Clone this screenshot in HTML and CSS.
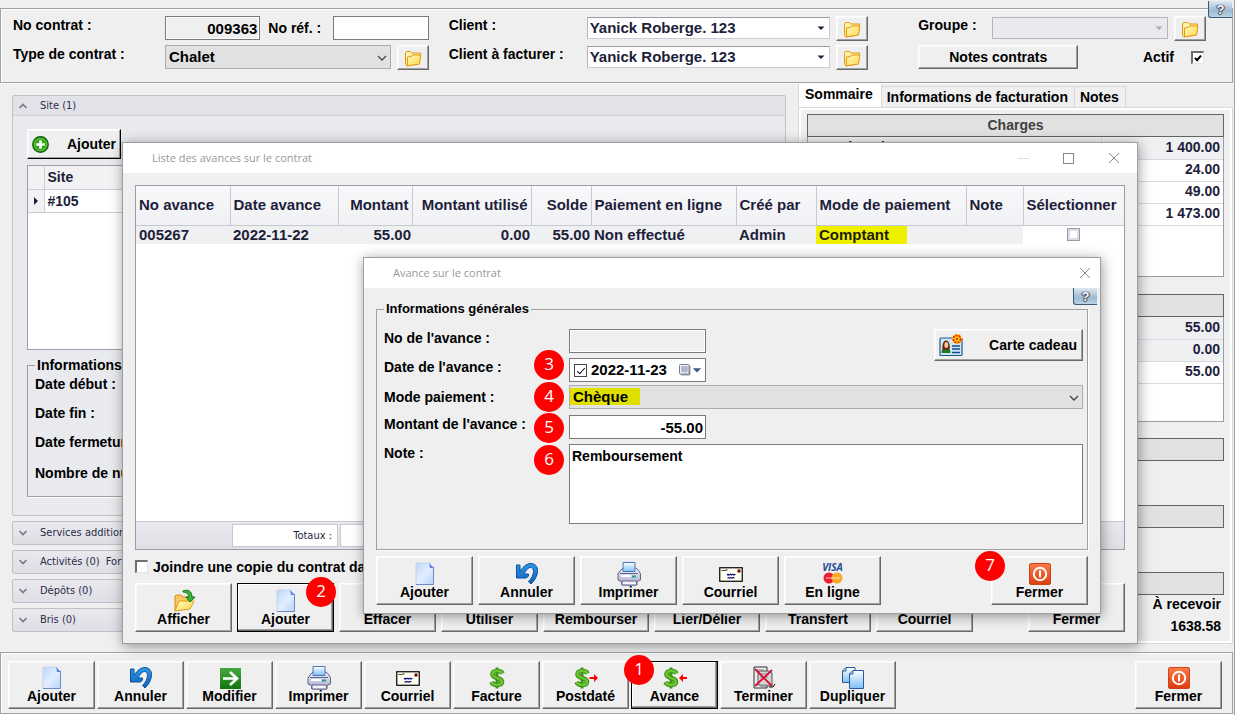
FILE: index.html
```html
<!DOCTYPE html>
<html lang="fr">
<head>
<meta charset="utf-8">
<title>Contrat 009363</title>
<link rel="stylesheet" href="styles.css">
</head>
<body>
<svg class="defs" aria-hidden="true">
  <defs>
    <linearGradient id="gPage" x1="0" y1="0" x2="1" y2="1"><stop offset="0" stop-color="#bcd4f8"/><stop offset=".5" stop-color="#e2eeff"/><stop offset="1" stop-color="#b4d2fb"/></linearGradient>
    <linearGradient id="gFold" x1="0" y1="0" x2="1" y2="1"><stop offset="0" stop-color="#fff8c0"/><stop offset="1" stop-color="#ffd84a"/></linearGradient>
    <linearGradient id="gRed" x1="0" y1="0" x2="0" y2="1"><stop offset="0" stop-color="#ff7a48"/><stop offset="1" stop-color="#dc3c0c"/></linearGradient>
    <linearGradient id="gGreen" x1="0" y1="0" x2="0" y2="1"><stop offset="0" stop-color="#45a83f"/><stop offset="1" stop-color="#137510"/></linearGradient>
    <linearGradient id="gBlue" x1="0" y1="0" x2="0" y2="1"><stop offset="0" stop-color="#2e9be6"/><stop offset="1" stop-color="#0d5fb8"/></linearGradient>
    <linearGradient id="gCopy" x1="0" y1="0" x2="0" y2="1"><stop offset="0" stop-color="#ffffff"/><stop offset="1" stop-color="#7cc0f4"/></linearGradient>
    <linearGradient id="gPrint" x1="0" y1="0" x2="0" y2="1"><stop offset="0" stop-color="#f4f4fc"/><stop offset="1" stop-color="#a4a4c8"/></linearGradient>
  </defs>
  <symbol id="i-page" viewBox="0 0 24 24"><path d="M3 1h14l4 4v18H3z" fill="url(#gPage)"/><path d="M3 1h14M3 1v22" stroke="#c4d4ee" fill="none"/><path d="M20.500 5v17.500H3" stroke="#6e8cc4" fill="none"/><path d="M16 1l5 5h-4z" fill="#5a86e0"/></symbol>
  <symbol id="i-undo" viewBox="0 0 24 24"><path d="M1.500 3h3.500v6.500C9 3 13 1.500 16 1.500c4 0 6.500 3 6.500 7 0 6-3.500 10.500-6.500 13.500l-2.500-2.500c3-3 5-6.500 5-10 0-2.500-1-4-3-4-2.500 0-4.500 3-6.500 6.500h4.500v2L11.500 16H1.500z" fill="url(#gBlue)" stroke="#0b4f9f"/></symbol>
  <symbol id="i-modify" viewBox="0 0 24 24"><rect x="2" y="2" width="21" height="21" fill="url(#gGreen)"/><path d="M5 12.500h13M12 6l7 6.500-7 6.500" fill="none" stroke="#fff" stroke-width="2.600"/></symbol>
  <symbol id="i-print" viewBox="0 0 24 24"><path d="M3 9l3-3h13l3 3 1.500 3v6l-3 1-1 4H5l-1-4-3-1v-6z" fill="url(#gPrint)" stroke="#62628e"/><path d="M6 .5h12v9H6z" fill="url(#gCopy)" stroke="#4a76b8"/><path d="M3 11.500h18" stroke="#62628e"/><path d="M4 14h10" stroke="#fff" stroke-width="2"/><rect x="15" y="13.500" width="2" height="2" fill="#2080f0"/><rect x="17" y="13.500" width="2" height="2" fill="#20c020"/><path d="M5 19h14l1 4H5z" fill="#f4f4fa" stroke="#62628e"/></symbol>
  <symbol id="i-mail" viewBox="0 0 24 24"><rect x=".75" y="5.750" width="22.500" height="13.500" fill="#fffff2" stroke="#000" stroke-width="1.200"/><rect x="18.500" y="7.500" width="3" height="3" fill="#800000"/><path d="M2.500 8l1 1 1-1 1 1 1-1h2" fill="none" stroke="#000" stroke-width=".9"/><path d="M8 13l1-.8 1 .8 1.500-.8 1 .8 1.500-.8 1 .8 1.500-.8M8.500 16.300l1-.9 1 .9 1-.9 1.500.9 1-.9 1.500.3" fill="none" stroke="#10108c" stroke-width="1.100"/></symbol>
  <symbol id="i-dollar" viewBox="0 0 24 24"><path d="M12 1.500v21" stroke="#3f9a18" stroke-width="3"/><path d="M17.500 7.500C16 4 8 4 7.500 8c-.5 4.500 10 3.500 9.500 8-.5 4-9 3.500-10.500 0" fill="none" stroke="#318c10" stroke-width="4.600"/><path d="M17.500 7.500C16 4 8 4 7.500 8c-.5 4.500 10 3.500 9.500 8-.5 4-9 3.500-10.500 0" fill="none" stroke="#6cc232" stroke-width="2.800"/></symbol>
  <symbol id="i-postdate" viewBox="0 0 24 24"><use href="#i-dollar" x="-4" width="24" height="24"/><path d="M15.500 11h4.500V8l4 4-4 4v-3h-4.500z" fill="#f00"/></symbol>
  <symbol id="i-advance" viewBox="0 0 24 24"><use href="#i-dollar" x="-4" width="24" height="24"/><path d="M24 11h-4V8l-4 4 4 4v-3h4z" fill="#f00"/></symbol>
  <symbol id="i-end" viewBox="0 0 24 24"><path d="M2 1h13v21H2z" fill="#ececec" stroke="#333"/><path d="M6 5h11l3 2v13H9l-3-2z" fill="#d4d4d4" stroke="#555"/><path d="M4 4h8M4 19h14M8 8h9M8 11h8" stroke="#888"/><path d="M3 3l17 17M20 4L3 20" stroke="#d80c30" stroke-width="1.800"/><path d="M17 21h4l2-3" stroke="#111" fill="none"/></symbol>
  <symbol id="i-copy" viewBox="0 0 24 24"><path d="M5 1.500h9v15H1.500V5z" fill="url(#gCopy)" stroke="#285c9c"/><path d="M1.500 5H5V1.500" fill="none" stroke="#285c9c"/><path d="M12 4.500h10.500v18h-14V8z" fill="url(#gCopy)" stroke="#285c9c"/><path d="M8.500 8H12V4.500" fill="none" stroke="#285c9c"/></symbol>
  <symbol id="i-close" viewBox="0 0 24 24"><rect x="1.500" y="1.500" width="21" height="21" rx="1.500" fill="url(#gRed)" stroke="#cc4418"/><circle cx="12" cy="12" r="6.200" fill="none" stroke="#fff" stroke-width="2"/><path d="M12 8.500v7" stroke="#fff" stroke-width="2"/></symbol>
  <symbol id="i-folder" viewBox="0 0 20 20"><path d="M2.500 5l1-1.500h4L9 5h8.500v2.500L16 16l-12 2-1.500-1.500z" fill="url(#gFold)" stroke="#e39a18"/><path d="M4.500 17.800V9l4-.5L9.500 7h8.300L16.500 16z" fill="url(#gFold)" stroke="#e39a18"/></symbol>
  <symbol id="i-open" viewBox="0 0 24 24"><path d="M3 22V7l2-1h4l2 2h7v5" fill="#f7c860" stroke="#d88a14"/><path d="M3 22l4-10h15l-4 8z" fill="url(#gFold)" stroke="#e09c1c"/><path d="M11 2c5-2 9 0 9 6h3l-5 5-4-5h3c0-3-3-5-6-5z" fill="#38b838" stroke="#0c740c"/></symbol>
  <symbol id="i-plus" viewBox="0 0 16 16"><circle cx="8" cy="8" r="7.300" fill="#30a81c" stroke="#136008" stroke-width="1.200"/><circle cx="8" cy="8" r="5.800" fill="none" stroke="#74cc54" stroke-width=".8"/><path d="M8 4v8M4 8h8" stroke="#fff" stroke-width="2.400"/></symbol>
  <symbol id="i-card" viewBox="0 0 24 24"><rect x="1" y="5" width="22" height="17.500" rx="1" fill="#cfe6f6" stroke="#1e5a86" stroke-width="1.200"/><path d="M2.500 20c0-4 2-5 4.500-5s4.500 1 4.500 5z" fill="#1c7a24"/><path d="M3.500 17C3 12 4 7.500 7 7.500s4.500 5 3.500 9z" fill="#6a2408"/><ellipse cx="7.300" cy="12" rx="2" ry="3" fill="#f6c49c"/><path d="M13 13h8M13 16h8M13 19.500h8" stroke="#104c8c" stroke-width="1.500"/><circle cx="18" cy="6" r="5" fill="#ffe400"/><circle cx="18" cy="6" r="3.600" fill="none" stroke="#f02c10" stroke-width="2" stroke-dasharray="2.200 .8"/><circle cx="18" cy="6" r="1.300" fill="#f02c10"/></symbol>
  <symbol id="i-chev" viewBox="0 0 10 10"><path d="M1 3l4 4 4-4" fill="none" stroke="currentColor" stroke-width="1.300"/></symbol>
  <symbol id="i-up" viewBox="0 0 10 10"><path d="M1.500 7L5 3.500 8.500 7" fill="none" stroke="currentColor" stroke-width="1.600"/></symbol>
  <symbol id="i-down" viewBox="0 0 10 10"><path d="M1.500 3L5 6.500 8.500 3" fill="none" stroke="currentColor" stroke-width="1.600"/></symbol>
  <symbol id="i-tri" viewBox="0 0 10 10"><path d="M1.500 3.500h7L5 7z" fill="currentColor"/></symbol>
  <symbol id="i-x" viewBox="0 0 12 12"><path d="M1 1l10 10M11 1L1 11" stroke="#8a8a8a" fill="none"/></symbol>
  <symbol id="i-cal" viewBox="0 0 12 12"><rect x="1.500" y="1.500" width="10" height="10" rx="1" fill="#a0a0a0"/><rect x=".5" y=".5" width="9.500" height="9.500" rx="1" fill="#f4f4fa" stroke="#74809c"/><path d="M2 3h7M2 5h7M2 7h7" stroke="#8490ac"/><path d="M4 2v6.500M6.500 2v6.500" stroke="#a0aac0"/></symbol>
</svg>

<section class="header frame">
  <div class="group g1">
    <div class="line">
      <label class="lbl w-a" for="no">No contrat :</label>
      <input id="no" class="box ro num grow" value="009363" readonly>
      <label class="lbl w-ref" for="ref">No réf. :</label>
      <input id="ref" class="box grow">
    </div>
    <div class="line">
      <label class="lbl w-a" for="type">Type de contrat :</label>
      <span class="combo grow"><select id="type" class="sel gray"><option>Chalet</option></select><svg><use href="#i-chev"/></svg></span>
      <button class="btn folder" aria-label="Ouvrir"><svg><use href="#i-folder"/></svg></button>
    </div>
  </div>
  <div class="group g2">
    <div class="line">
      <label class="lbl w-b" for="client">Client :</label>
      <span class="combo grow"><select id="client" class="sel dx"><option>Yanick Roberge. 123</option></select><svg><use href="#i-tri"/></svg></span>
      <button class="btn folder" aria-label="Ouvrir"><svg><use href="#i-folder"/></svg></button>
    </div>
    <div class="line">
      <label class="lbl w-b" for="fact">Client à facturer :</label>
      <span class="combo grow"><select id="fact" class="sel dx"><option>Yanick Roberge. 123</option></select><svg><use href="#i-tri"/></svg></span>
      <button class="btn folder" aria-label="Ouvrir"><svg><use href="#i-folder"/></svg></button>
    </div>
  </div>
  <div class="group g3">
    <div class="line">
      <label class="lbl w-c" for="grp">Groupe :</label>
      <span class="combo grow off"><select id="grp" class="sel dx" disabled><option></option></select><svg><use href="#i-tri"/></svg></span>
      <button class="btn folder" aria-label="Ouvrir"><svg><use href="#i-folder"/></svg></button>
    </div>
    <div class="line">
      <button class="btn notes">Notes contrats</button>
      <label class="actif">Actif <input type="checkbox" class="chk sunk" checked></label>
    </div>
  </div>
  <button class="help main-help">?</button>
</section>

<main class="main">
  <div class="left">
    <section class="item open">
      <h2 class="bar"><svg><use href="#i-up"/></svg>Site (1)</h2>
      <div class="site">
        <button class="btn add"><svg><use href="#i-plus"/></svg>Ajouter</button>
        <div class="sitegrid">
          <table>
            <tr><th class="mark"></th><th>Site</th></tr>
            <tr><td class="mark"><span class="arrow"></span></td><td>#105</td></tr>
          </table>
        </div>
        <fieldset class="info">
          <legend>Informations</legend>
          <p>Date début :</p>
          <p>Date fin :</p>
          <p>Date fermeture</p>
          <p>Nombre de nuits</p>
        </fieldset>
      </div>
    </section>
    <h2 class="item bar"><svg><use href="#i-down"/></svg>Services additionnels</h2>
    <h2 class="item bar"><svg><use href="#i-down"/></svg>Activités (0)&nbsp; Forfaits</h2>
    <h2 class="item bar"><svg><use href="#i-down"/></svg>Dépôts (0)</h2>
    <h2 class="item bar"><svg><use href="#i-down"/></svg>Bris (0)</h2>
  </div>

  <div class="right">
    <nav class="tabs">
      <button class="tab on">Sommaire</button><button class="tab">Informations de facturation</button><button class="tab">Notes</button>
    </nav>
    <div class="page">
      <h3 class="head">Charges</h3>
      <div class="list tall">
        <table>
          <tr class="alt"><td>Location site</td><td>1 400.00</td></tr>
          <tr><td></td><td>24.00</td></tr>
          <tr><td></td><td>49.00</td></tr>
          <tr><td></td><td>1 473.00</td></tr>
        </table>
      </div>
      <h3 class="head"></h3>
      <div class="list short">
        <table>
          <tr class="alt"><td></td><td>55.00</td></tr>
          <tr class="alt"><td></td><td>0.00</td></tr>
          <tr><td></td><td>55.00</td></tr>
        </table>
      </div>
      <h3 class="head"></h3>
      <h3 class="head spaced"></h3>
      <h3 class="head spaced"></h3>
      <p class="due">À recevoir</p>
      <p class="due">1638.58</p>
    </div>
  </div>
</main>

<footer class="footer frame">
  <button class="btn tool"><svg><use href="#i-page"/></svg>Ajouter</button>
  <button class="btn tool"><svg><use href="#i-undo"/></svg>Annuler</button>
  <button class="btn tool"><svg><use href="#i-modify"/></svg>Modifier</button>
  <button class="btn tool"><svg><use href="#i-print"/></svg>Imprimer</button>
  <button class="btn tool"><svg><use href="#i-mail"/></svg>Courriel</button>
  <button class="btn tool"><svg><use href="#i-dollar"/></svg>Facture</button>
  <button class="btn tool"><svg><use href="#i-postdate"/></svg>Postdaté</button>
  <button class="btn tool focus"><svg><use href="#i-advance"/></svg>Avance<span class="badge b1">1</span></button>
  <button class="btn tool"><svg><use href="#i-end"/></svg>Terminer</button>
  <button class="btn tool"><svg><use href="#i-copy"/></svg>Dupliquer</button>
  <button class="btn tool last"><svg><use href="#i-close"/></svg>Fermer</button>
</footer>

<section class="window list-window">
  <header class="title">Liste des avances sur le contrat
    <span class="ctl"><i class="min"></i><i class="max"></i><svg><use href="#i-x"/></svg></span>
  </header>
  <div class="content">
    <div class="grid">
      <table>
        <colgroup><col class="c1"><col class="c2"><col class="c3"><col class="c4"><col class="c5"><col class="c6"><col class="c7"><col class="c8"><col class="c9"><col></colgroup>
        <tr><th>No avance</th><th>Date avance</th><th class="r">Montant</th><th class="r">Montant utilisé</th><th class="r">Solde</th><th>Paiement en ligne</th><th>Créé par</th><th>Mode de paiement</th><th>Note</th><th>Sélectionner</th></tr>
        <tr><td>005267</td><td>2022-11-22</td><td class="r">55.00</td><td class="r">0.00</td><td class="r">55.00</td><td>Non effectué</td><td>Admin</td><td class="hl">Comptant</td><td></td><td class="pick"><input type="checkbox" class="chk dxchk" aria-label="Sélectionner"></td></tr>
      </table>
      <div class="totals"><span class="tot">Totaux :</span><span class="tot sum"></span></div>
    </div>
    <label class="join"><input type="checkbox" class="chk sunk">Joindre une copie du contrat dans</label>
    <div class="buttons">
      <button class="btn wide"><svg><use href="#i-open"/></svg>Afficher</button>
      <button class="btn wide focus"><svg><use href="#i-page"/></svg>Ajouter<span class="badge b2">2</span></button>
      <button class="btn wide low">Effacer</button>
      <button class="btn wide low">Utiliser</button>
      <button class="btn wide xl low">Rembourser</button>
      <button class="btn wide xl low">Lier/Délier</button>
      <button class="btn wide xl low">Transfert</button>
      <button class="btn wide low">Courriel</button>
      <button class="btn wide low last">Fermer</button>
    </div>
  </div>
</section>

<section class="window edit-window">
  <header class="title">Avance sur le contrat
    <span class="ctl"><svg><use href="#i-x"/></svg></span>
  </header>
  <button class="help dlg-help">?</button>
  <div class="content">
    <fieldset class="form">
      <legend>Informations générales</legend>
      <div class="fields">
        <label class="cell" for="f1">No de l'avance :</label>
        <div class="first"><input id="f1" class="box ro small" readonly>
          <button class="btn gift"><svg><use href="#i-card"/></svg>Carte cadeau</button></div>
        <label class="cell" for="f2">Date de l'avance :<span class="badge b3">3</span></label>
        <div class="date box small"><input type="checkbox" class="chk flat" checked aria-label="Date active"><input id="f2" class="plain" value="2022-11-23"><svg class="cal"><use href="#i-cal"/></svg><svg class="tri"><use href="#i-tri"/></svg></div>
        <label class="cell mid" for="f3">Mode paiement :<span class="badge b4">4</span></label>
        <span class="combo"><select id="f3" class="sel gray marked"><option>Chèque</option></select><svg><use href="#i-chev"/></svg></span>
        <label class="cell" for="f4">Montant de l'avance :<span class="badge b5">5</span></label>
        <input id="f4" class="box num small" value="-55.00">
        <label class="cell" for="f5">Note :<span class="badge b6">6</span></label>
        <textarea id="f5" class="box area">Remboursement</textarea>
      </div>
    </fieldset>
    <div class="buttons">
      <button class="btn wide"><svg><use href="#i-page"/></svg>Ajouter</button>
      <button class="btn wide"><svg><use href="#i-undo"/></svg>Annuler</button>
      <button class="btn wide"><svg><use href="#i-print"/></svg>Imprimer</button>
      <button class="btn wide"><svg><use href="#i-mail"/></svg>Courriel</button>
      <button class="btn wide"><span class="cards"><b>VISA</b><svg viewBox="0 0 20 12"><circle cx="6" cy="6" r="5.500" fill="#e8202c"/><circle cx="14" cy="6" r="5.500" fill="#f9a828"/><path d="M3 6h14" stroke="#fff" stroke-dasharray="1.500 .7"/></svg></span>En ligne</button>
      <button class="btn wide last"><svg><use href="#i-close"/></svg>Fermer<span class="badge b7">7</span></button>
    </div>
  </div>
</section>
</body>
</html>
```

FILE: styles.css
```css
*, *::before, *::after { box-sizing: border-box; }
body {
  margin: 0;
  min-height: 100vh;
  display: flex;
  flex-direction: column;
  position: relative;
  overflow: hidden;
  background: #efefef;
  border-right: 1px solid #8fa3b0;
  color: #000;
  font: bold 14px/18px "Liberation Sans", Arial, sans-serif;
}
.defs { position: absolute; width: 0; height: 0; }
h2, h3, p { margin: 0; font-size: 14px; }
button, input, select, textarea { font: inherit; color: inherit; margin: 0; }
table { border-collapse: collapse; table-layout: fixed; width: 100%; }
td, th { font-weight: bold; padding: 0; white-space: nowrap; overflow: hidden; }

.frame { border: 1px solid #a0a0a0; box-shadow: inset 1px 1px #fff, 0 1px #fff; }

/* controls */
.btn {
  position: relative;
  padding: 0;
  background: #efefef;
  border: 1px solid;
  border-color: #fff #696969 #696969 #fff;
  box-shadow: inset -1px -1px #a0a0a0, inset 1px 1px #f8f8f8;
}
.btn.focus { border-color: #000; box-shadow: inset -1px -1px #696969, inset -2px -2px #a0a0a0, inset 1px 1px #fff; }
.tool, .wide {
  display: flex;
  flex-direction: column;
  align-items: center;
  line-height: 16px;
  white-space: nowrap;
}
.tool { width: 87px; height: 48px; padding-top: 4px; }
.wide { width: 97px; height: 49px; padding-top: 5px; }
.xl { width: 106px; }
.low { justify-content: flex-end; padding-bottom: 4px; }
.tool svg, .wide > svg { width: 24px; height: 24px; flex: none; margin-bottom: -2px; }
.last { margin-left: auto; }
.box {
  height: 24px;
  min-width: 0;
  background: #fff;
  border: 1px solid #7a7a7a;
  border-radius: 0;
  padding: 0 2px;
  font-size: 15px;
  outline: none;
}
.ro { background: #efefef; box-shadow: inset 0 0 0 1px #fff; }
.num { text-align: right; }
.grow { flex: 1; width: 0; }
.combo { position: relative; display: block; color: #444; }
.combo svg { position: absolute; right: 4px; top: 8px; width: 10px; height: 10px; pointer-events: none; }
.sel {
  appearance: none;
  display: block;
  width: 100%;
  height: 24px;
  padding: 0 3px;
  border: 1px solid #adadad;
  border-radius: 0;
  background: #e1e1e1;
  color: #000;
  font-size: 15px;
}
.dx { height: 22px; padding: 0 2px; background: #fff; border-color: #9d9daa #ccccd6 #ccccd6 #b4b4c0; color: #1e1e3a; }
.combo:has(.dx) svg { top: 6px; color: #1e1e3a; }
.off .dx { background: #e9eaee; border-color: #b4b4c0; opacity: 1; }
.combo.off:has(.dx) svg { color: #aaaab4; }
.chk { appearance: none; flex: none; width: 13px; height: 13px; background: #fff; border: 1px solid #444; position: relative; }
.sunk { border-color: #6e6e6e #e3e3e3 #e3e3e3 #6e6e6e; border-width: 2px 1px 1px 2px; }
.chk:checked::after {
  content: "";
  position: absolute;
  left: 3px;
  top: 1px;
  width: 4px;
  height: 7px;
  border: solid #000;
  border-width: 0 2px 2px 0;
  transform: rotate(42deg);
}
.flat:checked::after { left: 4px; border-width: 0 1px 1px 0; height: 8px; }
.help {
  position: absolute;
  width: 24px;
  height: 17px;
  padding: 0;
  border: 1px solid #3c5a78;
  border-width: 0 0 1px 1px;
  border-radius: 0 0 0 3px;
  background: linear-gradient(#dbe8f2, #9dbad2 60%, #b8d2e6);
  color: #fff;
  font-size: 13px;
  line-height: 15px;
  text-shadow: 0 0 1px #223, 1px 0 1px #445, -1px 0 1px #445, 0 1px 1px #445;
}
.badge {
  position: absolute;
  z-index: 2;
  width: 30px;
  height: 30px;
  border-radius: 50%;
  background: #f00;
  color: #fff;
  font: 17px/28px "Open Sans", sans-serif;
  text-align: center;
}

/* contract header */
.header {
  position: relative;
  margin: 8px 1px 0 0;
  padding: 7px 26px 13px 12px;
  display: grid;
  grid-template-columns: 416fr 20fr 420fr 50fr 288fr;
}
.group { display: flex; flex-direction: column; gap: 5px; }
.g1 { grid-column: 1; }
.g2 { grid-column: 3; }
.g3 { grid-column: 5; }
.line { display: flex; align-items: flex-start; height: 24px; }
.line .folder { margin-left: 6px; }
.lbl { flex: none; white-space: nowrap; }
.w-a { width: 152px; }
.w-ref { width: 73px; padding: 3px 0 0 8px; }
.w-b { width: 138px; }
.w-c { width: 74px; }
.folder { width: 32px; height: 25px; flex: none; }
.folder svg { width: 20px; height: 20px; display: block; margin: 1px auto; }
.header .combo:has(.dx) { margin-top: 1px; }
.notes { width: 160px; height: 24px; }
.actif { display: flex; align-items: center; gap: 17px; height: 24px; margin-left: auto; padding-right: 2px; }
.main-help { right: 0; top: -8px; }

/* main area */
.main { flex: 1; display: flex; gap: 12px; padding-left: 12px; }
.left { flex: 1; display: flex; flex-direction: column; gap: 5px; padding: 12px 0 20px; min-width: 0; }
.item { border: 1px solid #bfc0ca; border-radius: 2px; }
.bar {
  display: flex;
  align-items: center;
  gap: 12px;
  height: 24px;
  padding-left: 5px;
  background: linear-gradient(#e9e9ee, #dddfe4);
  color: #2c2c48;
  font: 11px/20px "DejaVu Sans Condensed", sans-serif;
}
.bar svg { width: 10px; height: 10px; color: #787888; }
.open { flex: 1; display: flex; flex-direction: column; background: #e9eaee; }
.open .bar { height: 20px; border-bottom: 1px solid #cfd0d8; background: #e2e3e8; }
.site { flex: 1; display: flex; flex-direction: column; padding: 13px 14px 18px; }
.add { width: 94px; height: 30px; display: flex; align-items: center; gap: 18px; padding-left: 4px; border-color: #fff #000 #000 #fff; }
.add svg { width: 17px; height: 17px; }
.sitegrid { flex: 1; margin: 6px 0; background: #fff; border: 1px solid #9d9daa; }
.sitegrid th, .sitegrid td { height: 23px; text-align: left; padding-left: 3px; border: 0 solid #cccdd5; border-width: 0 0 1px; color: #1e1e3a; }
.sitegrid th { background: #f2f2f5; }
.sitegrid .mark { width: 16px; border-right-width: 1px; background: #f2f2f5; }
.arrow { display: block; width: 0; height: 0; margin-left: 3px; border: 4px solid transparent; border-left-color: #1e1e3a; border-right: 0; }
fieldset { margin: 0; min-width: 0; border: 1px solid #a0a0a0; box-shadow: 1px 1px #fff; }
legend { padding: 0 2px; font-size: 14px; line-height: 18px; }
.info { height: 141px; padding: 1px 7px; }
.info p { height: 29px; }
.info p:last-child { padding-top: 2px; }

.right { width: 436px; flex: none; display: flex; flex-direction: column; padding: 0 1px 8px 0; }
.tabs { display: flex; align-items: flex-end; }
.tab { height: 21px; padding: 0 6px 0 5px; border: 1px solid #d9d9d9; border-width: 1px 1px 0 0; background: #efefef; white-space: nowrap; }
.tab.on { height: 24px; padding: 0 8px 3px 6px; border-left-width: 1px; background: #fff; }
.page { flex: 1; padding: 4px 6px 0; border: 3px solid #fff; outline: 1px solid #d9d9d9; outline-offset: -1px; }
.head { height: 23px; margin-top: 17px; border: 1px solid #646464; background: #e1e1e1; color: #404040; font-size: 14px; line-height: 21px; text-align: center; }
.head:first-child { margin-top: 0; }
.page .spaced { margin-top: 44px; }
.list { border: 1px solid #9d9daa; border-top: 0; background: #fff; color: #1e1e3a; }
.tall { height: 140px; }
.short { height: 105px; }
.page .short + .head { margin-top: 16px; }
.list td { height: 22px; padding: 0 3px 2px; border-bottom: 1px solid #d9d9e0; font-size: 14px; }
.list td:last-child { width: 122px; border-left: 1px solid #d9d9e0; text-align: right; }
.alt td { background: #eff0f2; }
.due { height: 22px; padding-right: 3px; text-align: right; line-height: 18px; }

/* bottom toolbar */
.footer { margin: 0 1px 1px 0; padding: 8px 10px 4px 7px; display: flex; gap: 2px; }
.b1 { left: -8px; top: -7px; }

/* windows */
.window { position: absolute; display: flex; flex-direction: column; background: #efefef; border: 1px solid #9e9e9e; box-shadow: 1px 2px 12px rgba(0, 0, 0, .4); }
.list-window { left: 122px; right: 96px; top: 142px; bottom: 71px; }
.edit-window { left: 363px; right: 133px; top: 257px; }
.title { display: flex; height: 30px; padding: 0 17px 0 29px; background: #fff; color: #999; font: 11px/30px "Open Sans", sans-serif; }
.edit-window .title { padding-right: 9px; }
.ctl { margin-left: auto; display: flex; align-items: center; }
.ctl svg { width: 12px; height: 12px; }
.min { width: 11px; height: 1px; margin-right: 34px; background: #ddd; }
.max { width: 11px; height: 11px; margin-right: 34px; border: 1px solid #888; }
.content { flex: 1; display: flex; flex-direction: column; padding: 12px; }
.buttons { display: flex; gap: 5px; }
.list-window .buttons { padding-left: 0; }
.grid { flex: 1; display: flex; flex-direction: column; justify-content: space-between; background: #fff; border: 1px solid #9d9daa; color: #1e1e3a; font-size: 15px; }
.c1 { width: 94px; } .c2 { width: 108px; } .c3 { width: 74px; } .c4 { width: 119px; } .c5 { width: 60px; }
.c6 { width: 145px; } .c7 { width: 80px; } .c8 { width: 150px; } .c9 { width: 57px; }
.grid th { height: 39px; padding: 0 3px; text-align: left; background: linear-gradient(#f8f8fa, #f0f1f4); border: 0 solid #c8c9d2; border-width: 0 1px 1px 0; }
.grid th:last-child { border-right: 0; }
.grid td { height: 19px; padding: 0 1px 0 3px; background: #eff0f2; line-height: 18px; }
.grid .r { text-align: right; }
.grid .hl { background: linear-gradient(90deg, #efef00 91px, #eff0f2 91px); color: #1e1e08; }
.grid .pick { background: #fff; padding: 0; text-align: center; }
.dxchk { display: block; margin: 0 auto; border-color: #9a9aac; box-shadow: inset 0 0 0 2px #dcdce4; }
.totals { display: flex; gap: 2px; height: 28px; padding: 2px 0 2px 96px; background: linear-gradient(#e8e9ee, #dfe0e6); border-top: 1px solid #c8c9d2; }
.tot { width: 106px; height: 23px; padding-right: 5px; border: 1px solid #c8c9d2; background: #fff; font: 11px/22px "DejaVu Sans Condensed", sans-serif; text-align: right; }
.sum { width: 74px; }
.join { display: flex; align-items: center; gap: 5px; height: 33px; white-space: nowrap; }
.list-window .content { padding-bottom: 11px; }
.b2 { left: 68px; top: -7px; }

.dlg-help { right: 3px; top: 30px; }
.form { padding: 11px 4px 25px 7px; margin-bottom: 6px; }
.form legend { font-size: 13px; }
.edit-window .content { padding: 12px 12px 8px; }
.fields { display: grid; grid-template-columns: 185px 1fr; grid-template-rows: 29px 27px 30px 29px 80px; align-items: start; }
.cell { position: relative; height: 100%; white-space: nowrap; }
.mid { padding-top: 3px; }
.small { width: 137px; }
.first { display: flex; justify-content: space-between; }
.gift { width: 149px; height: 32px; display: flex; align-items: center; justify-content: space-between; padding: 0 5px 0 4px; }
.gift svg { width: 24px; height: 24px; }
.date { display: flex; align-items: center; gap: 4px; padding: 0 4px; }
.plain { width: 84px; padding: 0; border: 0; background: none; outline: none; }
.date svg { width: 12px; height: 12px; flex: none; }
.date .tri { margin-left: -4px; color: #3c5a8c; }
.marked { background: linear-gradient(#e0e000, #e0e000) 0 2px / 70px 17px no-repeat #e1e1e1; }
.area { width: 100%; height: 80px; padding: 2px; resize: none; line-height: 18px; font-size: 14px; }
.b3, .b4, .b5, .b6 { right: 5px; }
.b3 { top: -8px; }
.b4 { top: -3px; }
.b5 { top: -2px; }
.b6 { top: 1px; }
.b7 { left: -17px; top: -6px; }
.cards { display: flex; flex-direction: column; align-items: center; height: 24px; margin-bottom: -2px; }
.cards b { color: #1c4a94; font: italic bold 10px/10px "Open Sans", sans-serif; }
.cards svg { width: 20px; height: 12px; }
```
